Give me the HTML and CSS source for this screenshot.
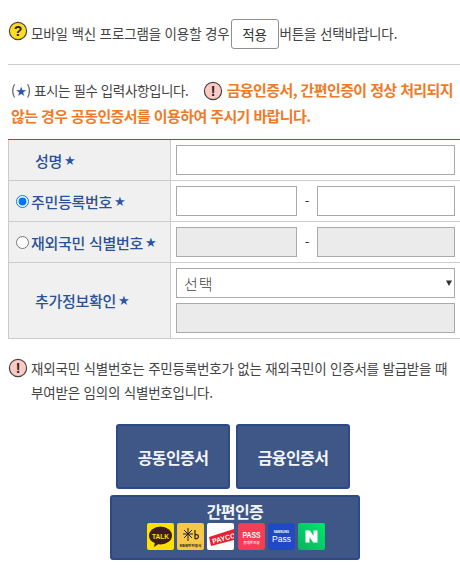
FILE: index.html
```html
<!DOCTYPE html>
<html lang="ko">
<head>
<meta charset="utf-8">
<title>본인확인</title>
<link rel="stylesheet" href="styles.css">
</head>
<body>
<div class="page">
  <p class="notice">
    <svg class="ico up" viewBox="0 0 20 20"><circle cx="10" cy="10" r="8.6" fill="#ffdd1a" stroke="#444" stroke-width="1.2"/><text x="10" y="15" text-anchor="middle" class="ico-t">?</text></svg>
    <span class="n-text">모바일 백신 프로그램을 이용할 경우</span><button class="apply" type="button">적용</button><span>버튼을 선택바랍니다.</span>
  </p>
  <hr class="rule">
  <div class="req">
    <span class="req-a">(<b class="star">★</b>) 표시는 필수 입력사항입니다.</span>
    <svg class="ico warn-ico" viewBox="0 0 20 20"><circle cx="10" cy="10" r="8.6" fill="#ffc9c4" stroke="#444" stroke-width="1.2"/><text x="10" y="15" text-anchor="middle" class="ico-t">!</text></svg>
    <strong class="warn">금융인증서, 간편인증이 정상 처리되지 않는 경우 공동인증서를 이용하여 주시기 바랍니다.</strong>
  </div>
  <div class="form">
    <div class="th th-c">성명<b class="star">★</b></div>
    <div class="td"><input class="inp" type="text"></div>
    <div class="th"><input class="radio" type="radio" name="k" checked>주민등록번호<b class="star">★</b></div>
    <div class="td pair"><input class="inp" type="text"><span class="dash">-</span><input class="inp" type="text"></div>
    <div class="th"><input class="radio" type="radio" name="k">재외국민 식별번호<b class="star">★</b></div>
    <div class="td pair"><input class="inp off" type="text" disabled><span class="dash">-</span><input class="inp off" type="text" disabled></div>
    <div class="th th-c last">추가정보확인<b class="star">★</b></div>
    <div class="td stack last">
      <div class="sel"><span>선택</span><svg class="caret" viewBox="0 0 8 8"><path d="M1 1.5h6L4 7z" fill="#333"/></svg></div>
      <input class="inp off" type="text" disabled>
    </div>
  </div>
  <div class="info">
    <svg class="ico" viewBox="0 0 20 20"><circle cx="10" cy="10" r="8.6" fill="#ffc9c4" stroke="#444" stroke-width="1.2"/><text x="10" y="15" text-anchor="middle" class="ico-t">!</text></svg>
    <p>재외국민 식별번호는 주민등록번호가 없는 재외국민이 인증서를 발급받을 때 부여받은 임의의 식별번호입니다.</p>
  </div>
  <div class="btns">
    <div class="btn-row">
      <button class="btn" type="button">공동인증서</button>
      <button class="btn" type="button">금융인증서</button>
    </div>
    <button class="btn wide" type="button">
      <span class="wide-t">간편인증</span>
      <span class="logos">
        <svg class="logo" viewBox="0 0 27 27"><rect width="27" height="27" rx="2" fill="#ffe000"/><ellipse cx="13.5" cy="12.500" rx="11.500" ry="9" fill="#3c1e1e"/><path d="M8 19l-1 5 6-4z" fill="#3c1e1e"/><text x="13.500" y="15.500" text-anchor="middle" class="lg" font-size="7.500" fill="#ffe000" textLength="17" lengthAdjust="spacingAndGlyphs">TALK</text></svg>
        <svg class="logo" viewBox="0 0 27 27"><rect width="27" height="27" rx="2" fill="#f7c845"/><path d="M11 5v13M7 7l8 8M15 7l-8 8M6 11h10" stroke="#222" stroke-width="1" fill="none"/><path d="M18 7v9M18 12c4-2 5 4 0 4" stroke="#222" stroke-width="1.200" fill="none"/><text x="13.500" y="23.500" text-anchor="middle" class="lg" font-size="3.600" fill="#222">KB국민인증서</text></svg>
        <svg class="logo" viewBox="0 0 27 27"><rect width="27" height="27" rx="2" fill="#fff"/><path d="M2 14L27 6v11L4 23z" fill="#e8202e"/><text x="17" y="18" text-anchor="middle" class="lg" font-size="7" fill="#fff" transform="rotate(-15 16 16)">PAYCO</text></svg>
        <svg class="logo" viewBox="0 0 27 27"><rect width="27" height="27" rx="3" fill="#f83c55"/><text x="13.500" y="14.500" text-anchor="middle" class="lg" font-size="9.500" fill="#fff" textLength="18" lengthAdjust="spacingAndGlyphs">PASS</text><text x="13.500" y="20.500" text-anchor="middle" class="lg" font-size="3.600" fill="#ffe0e4">휴대폰인증</text></svg>
        <svg class="logo" viewBox="0 0 27 27"><rect width="27" height="27" rx="3" fill="#1f4ac4"/><text x="13.500" y="10" text-anchor="middle" class="lg" font-size="3" fill="#fff">SAMSUNG</text><text x="13.500" y="19" text-anchor="middle" class="lp" font-size="8.500" fill="#fff">Pass</text></svg>
        <svg class="logo" viewBox="0 0 27 27"><defs><linearGradient id="ng" x1="1" y1="0" x2="0" y2="1"><stop offset="0" stop-color="#00e86a"/><stop offset="1" stop-color="#0bb066"/></linearGradient></defs><rect width="27" height="27" rx="2" fill="url(#ng)"/><path d="M7.500 7.500h4.400l3.600 5.600V7.500h4v12h-4.300l-3.700-5.600v5.600h-4z" fill="#fff"/></svg>
      </span>
    </button>
  </div>
</div>
</body>
</html>
```
FILE: styles.css
```css
* { box-sizing: border-box; }
html, body { margin: 0; padding: 0; background: #fff; }
body {
  width: 460px;
  height: 572px;
  overflow: hidden;
  font-family: "Noto Sans CJK KR", "Noto Sans", sans-serif;
  font-size: 13.5px;
  color: #444;
  letter-spacing: -0.15px;
}
.page { padding: 19px 0 0 8px; }
.ico { width: 20px; height: 20px; flex: none; }
.up { margin-top: -6px; }
.ico-t { font: 700 14px "Liberation Sans", sans-serif; fill: #222; letter-spacing: 0; }
.notice { margin: 0; display: flex; align-items: center; height: 30px; }
.n-text { margin-left: 3px; margin-top: -3px; }
.notice span:last-child { margin-top: -3px; }
.apply {
  width: 48px;
  height: 30px;
  margin: 0 1px;
  padding: 0;
  background: #fff;
  border: 1px solid #8f8f8f;
  border-radius: 3px;
  font: inherit;
  letter-spacing: 0;
  color: #333;
}
.rule { margin: 15px 0 0; border: 0; border-top: 1px solid #ccc; }
.req { margin-top: 13px; height: 61px; padding-left: 3px; line-height: 24px; }
.req-a { margin-right: 11px; letter-spacing: -0.4px; }
.star { color: #2a56a5; font-weight: 700; font-size: 13px; font-family: "DejaVu Sans", sans-serif; }
.warn-ico { vertical-align: -5px; }
.warn { color: #f07a28; font-size: 15px; font-weight: 700; letter-spacing: -0.6px; }
.form {
  display: grid;
  grid-template-columns: 163px 1fr;
  grid-template-rows: 41px 41px 41px 76px;
  border-top: 1px solid #2f66b5;
}
.th {
  display: flex;
  align-items: center;
  gap: 2px;
  padding-left: 7px;
  background: #f0f0f0;
  border-left: 1px solid #ccc;
  border-right: 1px solid #ccc;
  border-bottom: 1px solid #ccc;
  color: #2a5298;
  font-size: 15px;
  font-weight: 500;
  letter-spacing: -0.3px;
  white-space: pre;
}
.th-c { padding-left: 26px; }
.td {
  display: flex;
  align-items: center;
  padding: 0 5px;
  border-bottom: 1px solid #ccc;
}
.pair .inp:first-child { width: 121px; flex: none; }
.pair .inp:last-child { width: 138px; flex: none; }
.dash { width: 20px; text-align: center; color: #333; letter-spacing: 0; }
.inp {
  display: block;
  width: 100%;
  height: 30px;
  padding: 0 6px;
  margin: 0;
  background: #fff;
  border: 1px solid #aaa;
  border-radius: 0;
}
.off { background: #ebebeb; }
.radio { width: 13px; height: 13px; margin: 0; flex: none; }
.stack { flex-direction: column; justify-content: center; gap: 5px; }
.sel {
  width: 100%;
  height: 30px;
  display: flex;
  align-items: center;
  justify-content: space-between;
  padding: 0 1px 0 7px;
  border: 1px solid #aaa;
  font-size: 15px;
  font-weight: 300;
  letter-spacing: 1px;
  color: #444;
}
.caret { width: 8px; height: 8px; }
.info { display: flex; gap: 3px; margin-top: 17px; line-height: 24px; }
.info .ico { margin-top: 2px; }
.info p { margin: 0; width: 425px; word-break: keep-all; letter-spacing: -0.2px; }
.btns { display: flex; flex-direction: column; align-items: center; gap: 6px; margin-top: 20px; width: 450px; }
.btn-row { display: flex; gap: 6px; }
.btn {
  width: 114px;
  height: 65px;
  background: #3e5787;
  border: 2px solid #2e4a86;
  border-radius: 3px;
  color: #f2f4f8;
  font: 700 16px "Noto Sans CJK KR", sans-serif;
  letter-spacing: -0.6px;
  padding: 0;
}
.btn.wide {
  width: 250px;
  margin-left: 4px;
  display: flex;
  flex-direction: column;
  align-items: center;
  padding-top: 4px;
}
.wide-t { line-height: 20px; }
.logos { display: flex; gap: 3.3px; margin: 2px 0 0 2px; }
.logo { width: 27px; height: 27px; display: block; }
.lg { font-family: "Liberation Sans", "Noto Sans CJK KR", sans-serif; font-weight: 700; letter-spacing: 0; }
.lp { font-family: "Liberation Sans", sans-serif; font-weight: 400; letter-spacing: 0; }
```
